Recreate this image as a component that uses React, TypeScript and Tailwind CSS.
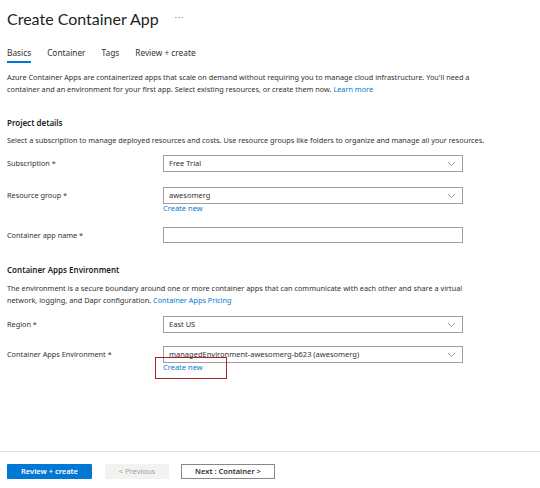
import React from "react";

const Chevron = () => (
  <svg width="9" height="6" viewBox="0 0 9 6" className="shrink-0">
    <path d="M1 1 L4.5 4.5 L8 1" fill="none" stroke="#8a8886" strokeWidth="0.8" />
  </svg>
);

function Select({ value }: { value: string }) {
  return (
    <div className="flex h-[17px] w-[300px] items-center justify-between border border-[#a19f9d] bg-white pl-[5px] pr-[6px] text-[7.5px] text-[#323130]">
      <span>{value}</span>
      <Chevron />
    </div>
  );
}

function Row({ label, children, h }: { label: string; children: React.ReactNode; h: string }) {
  return (
    <div className={`flex ${h}`}>
      <div className="w-[156px] shrink-0 pt-[3px] text-[7.3px] text-[#323130]">{label}</div>
      <div>{children}</div>
    </div>
  );
}

export default function App() {
  return (
    <div
      className="relative h-[488px] w-[540px] overflow-hidden bg-white text-[#323130]"
      style={{ fontFamily: '"Noto Sans", "Open Sans", sans-serif' }}
    >
      <div className="px-[7px]">
        <div className="flex h-[30px] items-end pb-[3px]">
          <h1 className="text-[16px] leading-none text-[#201f1e]" style={{ fontFamily: 'Lato, "Noto Sans", sans-serif' }}>
            Create Container App
          </h1>
          <span className="ml-[16px] pb-[3px] text-[8px] tracking-[1px] text-[#605e5c]">···</span>
        </div>
        <div className="mt-[16px] flex gap-[16px] text-[8.3px] text-[#323130]">
          <div className="flex flex-col">
            <span className="leading-[14px]">Basics</span>
            <div className="mt-[1px] h-[2px] bg-[#0078d4]" />
          </div>
          <span className="leading-[14px]">Container</span>
          <span className="leading-[14px]">Tags</span>
          <span className="leading-[14px]">Review + create</span>
        </div>
        <p className="mt-[8px] w-[480px] text-[7.3px] leading-[12px]">
          Azure Container Apps are containerized apps that scale on demand without requiring you to manage cloud infrastructure. You'll need a container and an environment for your first app. Select existing resources, or create them now.{" "}
          <span className="text-[#0078d4]">Learn more</span>
        </p>
        <h2 className="mt-[22px] text-[8px] font-semibold leading-[12px] text-[#201f1e]">Project details</h2>
        <p className="mt-[5px] text-[7.3px] leading-[12px]">
          Select a subscription to manage deployed resources and costs. Use resource groups like folders to organize and manage all your resources.
        </p>
        <div className="mt-[9px] flex flex-col">
          <Row label="Subscription *" h="h-[32px]">
            <Select value="Free Trial" />
          </Row>
          <Row label="Resource group *" h="h-[40px]">
            <Select value="awesomerg" />
            <div className="mt-[-1px] text-[7.5px] leading-[10px] text-[#0078d4]">Create new</div>
          </Row>
          <Row label="Container app name *" h="h-[31px]">
            <div className="h-[16px] w-[300px] border border-[#a19f9d]" />
          </Row>
        </div>
        <h2 className="mt-[6px] text-[8px] font-semibold leading-[12px] text-[#201f1e]">Container Apps Environment</h2>
        <p className="mt-[6px] w-[484px] text-[7.3px] leading-[12px]">
          The environment is a secure boundary around one or more container apps that can communicate with each other and share a virtual network, logging, and Dapr configuration.{" "}
          <span className="text-[#0078d4]">Container Apps Pricing</span>
        </p>
        <div className="mt-[10px] flex flex-col">
          <Row label="Region *" h="h-[30px]">
            <Select value="East US" />
          </Row>
          <Row label="Container Apps Environment *" h="h-[40px]">
            <Select value="managedEnvironment-awesomerg-b623 (awesomerg)" />
            <div className="relative mt-[-1px] text-[7.5px] leading-[10px] text-[#0078d4]">
              Create new
              <div className="absolute left-[-8px] top-[-5px] h-[22px] w-[72px] border-[1.5px] border-[#a4262c]" />
            </div>
          </Row>
        </div>
      </div>
      <div className="absolute left-0 right-0 top-[451px] border-t border-[#e1dfdd]">
        <div className="mt-[12px] flex items-center px-[7px] text-[7.5px]">
          <div className="flex h-[15px] w-[85px] items-center justify-center rounded-[1px] bg-[#0078d4] font-semibold text-white">Review + create</div>
          <div className="ml-[13px] flex h-[15px] w-[64px] items-center justify-center bg-[#f3f2f1] text-[#a19f9d]">&lt; Previous</div>
          <div className="ml-[12px] flex h-[15px] w-[94px] items-center justify-center border border-[#8a8886] font-semibold text-[#323130]">Next : Container &gt;</div>
        </div>
      </div>
    </div>
  );
}
